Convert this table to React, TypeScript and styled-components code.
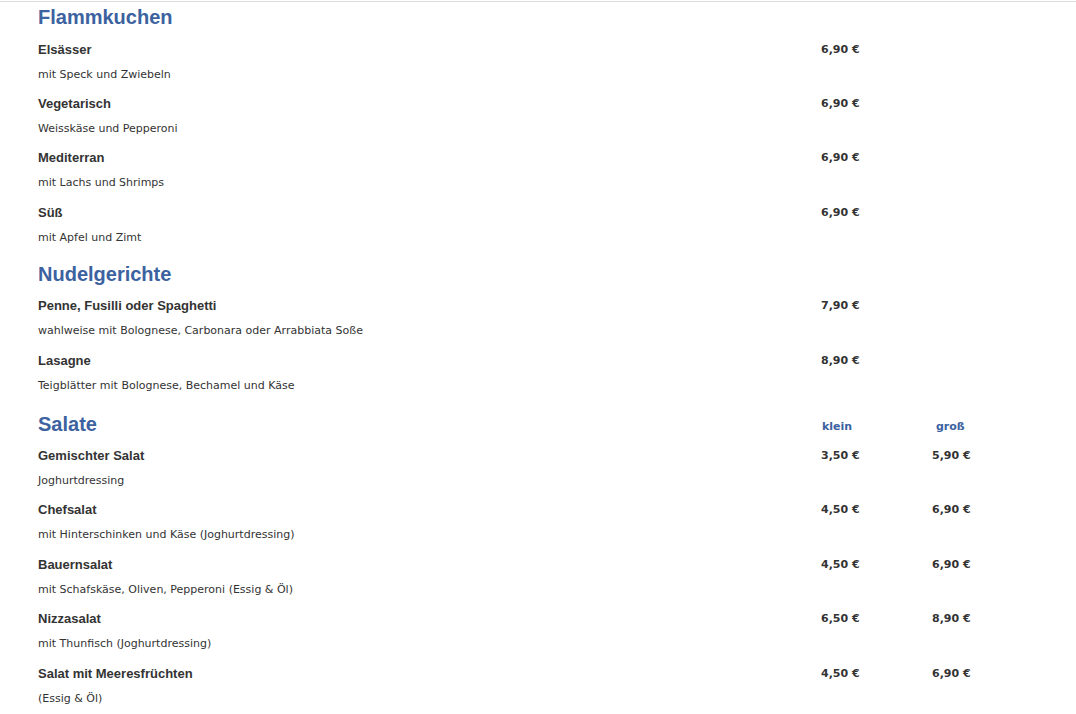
import styled, { createGlobalStyle } from 'styled-components';

const GlobalStyle = createGlobalStyle`
  html, body {
    margin: 0;
    padding: 0;
    background: #fff;
  }
  body {
    border-top: 1px solid #dcdcdc;
    margin-top: 1px;
  }
`;

type Item = { name: string; desc: string; prices: string[] };
type Section = { title: string; sizes?: string[]; items: Item[] };

const menu: Section[] = [
  {
    title: 'Flammkuchen',
    items: [
      { name: 'Elsässer', desc: 'mit Speck und Zwiebeln', prices: ['6,90 €'] },
      { name: 'Vegetarisch', desc: 'Weisskäse und Pepperoni', prices: ['6,90 €'] },
      { name: 'Mediterran', desc: 'mit Lachs und Shrimps', prices: ['6,90 €'] },
      { name: 'Süß', desc: 'mit Apfel und Zimt', prices: ['6,90 €'] },
    ],
  },
  {
    title: 'Nudelgerichte',
    items: [
      {
        name: 'Penne, Fusilli oder Spaghetti',
        desc: 'wahlweise mit Bolognese, Carbonara oder Arrabbiata Soße',
        prices: ['7,90 €'],
      },
      { name: 'Lasagne', desc: 'Teigblätter mit Bolognese, Bechamel und Käse', prices: ['8,90 €'] },
    ],
  },
  {
    title: 'Salate',
    sizes: ['klein', 'groß'],
    items: [
      { name: 'Gemischter Salat', desc: 'Joghurtdressing', prices: ['3,50 €', '5,90 €'] },
      { name: 'Chefsalat', desc: 'mit Hinterschinken und Käse (Joghurtdressing)', prices: ['4,50 €', '6,90 €'] },
      { name: 'Bauernsalat', desc: 'mit Schafskäse, Oliven, Pepperoni (Essig & Öl)', prices: ['4,50 €', '6,90 €'] },
      { name: 'Nizzasalat', desc: 'mit Thunfisch (Joghurtdressing)', prices: ['6,50 €', '8,90 €'] },
      { name: 'Salat mit Meeresfrüchten', desc: '(Essig & Öl)', prices: ['4,50 €', '6,90 €'] },
    ],
  },
];

export default function App() {
  return (
    <>
      <GlobalStyle />
      <Page>
        {menu.map((section, si) => (
          <SectionBlock key={section.title} $first={si === 0} $withSizes={!!section.sizes}>
            <HeadRow>
              <Title>{section.title}</Title>
              {section.sizes?.map((s, i) => (
                <SizeLabel key={s} $shift={i > 0}>
                  {s}
                </SizeLabel>
              ))}
            </HeadRow>
            {section.items.map((item) => (
              <ItemBlock key={item.name}>
                <NameRow>
                  <Name>{item.name}</Name>
                  {item.prices.map((p, i) => (
                    <Price key={i}>{p}</Price>
                  ))}
                </NameRow>
                <Desc>{item.desc}</Desc>
              </ItemBlock>
            ))}
          </SectionBlock>
        ))}
      </Page>
    </>
  );
}

const Page = styled.div`
  padding: 3px 0 0 38px;
  color: #333;
`;

const SectionBlock = styled.section<{ $first: boolean; $withSizes: boolean }>`
  margin-top: ${(p) => (p.$first ? '0' : p.$withSizes ? '14px' : '12px')};
`;

const Columns = styled.div`
  display: grid;
  grid-template-columns: 783px 111px 1fr;
  align-items: center;
`;

const HeadRow = styled(Columns)`
  height: 24px;
  margin-bottom: 7.5px;
`;

const Title = styled.h2`
  margin: 0;
  font-family: 'Liberation Sans', Arial, sans-serif;
  font-size: 20px;
  font-weight: bold;
  line-height: 24px;
  color: #3c62a0;
`;

const SizeLabel = styled.span<{ $shift: boolean }>`
  font-family: 'DejaVu Sans', Verdana, sans-serif;
  font-size: 11px;
  font-weight: bold;
  color: #3c62a0;
  padding-left: ${(p) => (p.$shift ? '4px' : '1px')};
  position: relative;
  top: 3px;
`;

const ItemBlock = styled.div`
  margin-bottom: 4.4px;
`;

const NameRow = styled(Columns)`
  height: 25px;
`;

const Name = styled.span`
  font-family: 'Liberation Sans', Arial, sans-serif;
  font-size: 13px;
  font-weight: bold;
`;

const Price = styled.span`
  font-family: 'DejaVu Sans', Verdana, sans-serif;
  font-size: 11px;
  font-weight: bold;
`;

const Desc = styled.div`
  font-family: 'DejaVu Sans', Verdana, sans-serif;
  font-size: 11px;
  line-height: 25px;
  height: 25px;
`;
